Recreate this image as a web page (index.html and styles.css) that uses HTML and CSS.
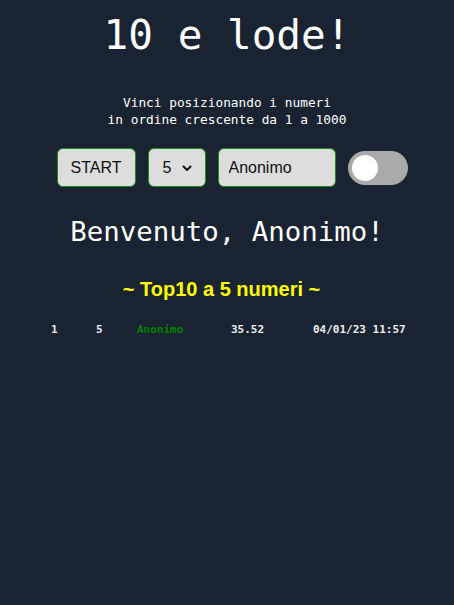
FILE: index.html
```html
<!DOCTYPE html>
<html lang="it">
<head>
<meta charset="utf-8">
<title>10 e lode!</title>
<link rel="stylesheet" href="styles.css">
</head>
<body>
<main class="page">
  <h1 class="title">10 e lode!</h1>
  <p class="subtitle">Vinci posizionando i numeri<br>in ordine crescente da 1 a 1000</p>
  <div class="controls">
    <button class="ctrl btn">START</button>
    <div class="select-wrap">
      <select class="ctrl sel">
        <option>5</option>
      </select>
      <svg class="chev" width="10" height="7" viewBox="0 0 10 7"><path d="M1.5 1.5 L5 5 L8.5 1.5" fill="none" stroke="#111" stroke-width="2" stroke-linecap="round" stroke-linejoin="round"/></svg>
    </div>
    <input class="ctrl name" type="text" value="Anonimo">
    <label class="switch"><span class="knob"></span></label>
  </div>
  <h2 class="welcome">Benvenuto, Anonimo!</h2>
  <h3 class="top">~ Top10 a 5 numeri ~</h3>
  <table class="scores">
    <tr>
      <td class="c-pos">1</td>
      <td class="c-n">5</td>
      <td class="c-name">Anonimo</td>
      <td class="c-time">35.52</td>
      <td class="c-date">04/01/23 11:57</td>
    </tr>
  </table>
</main>
</body>
</html>
```
FILE: styles.css
```css
html, body {
  margin: 0;
  padding: 0;
  background: #1a2332;
  color: #ffffff;
  font-family: "DejaVu Sans Mono", "Liberation Mono", monospace;
}
.page {
  width: 454px;
  text-align: center;
  padding-top: 11px;
}
.title {
  margin: 0;
  font-size: 41px;
  font-weight: normal;
  line-height: 48px;
}
.subtitle {
  margin: 35px 0 0;
  font-size: 12.8px;
  line-height: 17px;
  font-weight: normal;
  color: #ffffff;
}
.controls {
  display: flex;
  justify-content: center;
  align-items: center;
  gap: 12px;
  margin-top: 20px;
  padding-left: 10px;
}
.ctrl {
  box-sizing: border-box;
  height: 39px;
  background: #dddddd;
  border: 1px solid #1a8f1a;
  border-radius: 6px;
  font-family: "Liberation Sans", Arial, sans-serif;
  font-size: 16px;
  color: #111;
  margin: 0;
}
.btn {
  width: 79px;
  padding: 0;
}
.select-wrap {
  position: relative;
  display: flex;
}
.sel {
  -webkit-appearance: none;
  appearance: none;
  width: 58px;
  padding: 0 0 0 14px;
}
.chev {
  position: absolute;
  right: 14px;
  top: 17px;
}
.name {
  width: 118px;
  padding: 0 10px;
}
.switch {
  display: flex;
  align-items: center;
  box-sizing: border-box;
  width: 60px;
  height: 34px;
  border-radius: 17px;
  background: #aaaaaa;
  padding-left: 4px;
}
.knob {
  width: 26px;
  height: 26px;
  border-radius: 50%;
  background: #ffffff;
}
.welcome {
  margin: 28px 0 0;
  font-size: 27.4px;
  font-weight: normal;
  line-height: 34px;
}
.top {
  margin: 28px 0 0;
  padding-right: 11px;
  font-family: "Liberation Sans", Arial, sans-serif;
  font-size: 20px;
  font-weight: bold;
  color: #ffff00;
  line-height: 24px;
}
.scores {
  margin: 22px 0 0 45px;
  border-collapse: collapse;
  font-size: 11px;
  font-weight: bold;
  color: #eeeeee;
  text-align: left;
}
.scores td {
  padding: 0;
  line-height: 14px;
}
.c-pos { width: 45px; padding-left: 6px !important; }
.c-n { width: 41px; }
.c-name { width: 94px; color: #008000; }
.c-time { width: 82px; }
.c-date { white-space: nowrap; }
```
